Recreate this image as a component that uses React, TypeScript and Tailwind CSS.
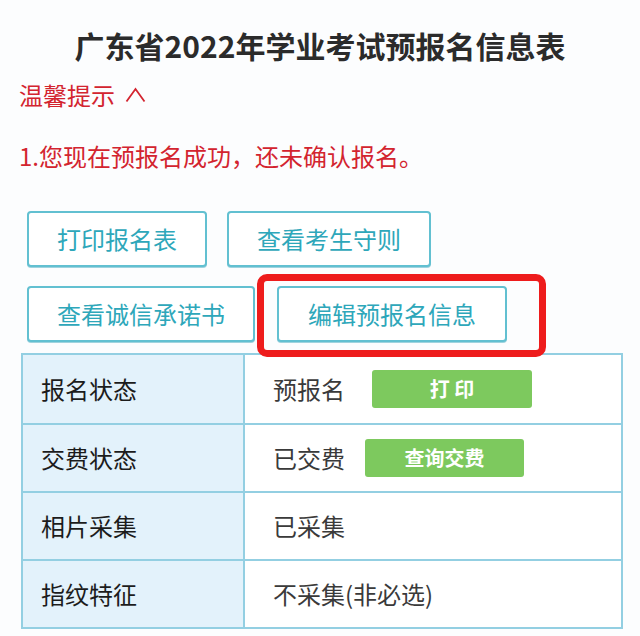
const FONT = '"Noto Sans CJK SC", "Noto Sans", sans-serif';

const rows = [
  { label: '报名状态', value: '预报名', action: '打 印', gap: 'ml-[27px]', w: 'w-[160px]' },
  { label: '交费状态', value: '已交费', action: '查询交费', gap: 'ml-[20px]', w: 'w-[159px]' },
  { label: '相片采集', value: '已采集' },
  { label: '指纹特征', value: '不采集(非必选)' },
];

function OutlineButton({ children, className = '' }: { children: React.ReactNode; className?: string }) {
  return (
    <div
      className={`flex h-[56px] items-center justify-center rounded-[4px] border-2 border-[#62c0d1] bg-white px-[28px] text-[24px] leading-none text-[#2ea7ba] shadow-[0_1px_0_#9fd3de] ${className}`}
    >
      {children}
    </div>
  );
}

export default function App() {
  return (
    <div className="h-[636px] w-[640px] overflow-hidden bg-[#fcfdfe]" style={{ fontFamily: FONT }}>
      {/* title */}
      <div className="pt-[25px] text-center text-[30px] font-bold leading-[40px] text-[#2b2b2b]">
        广东省2022年学业考试预报名信息表
      </div>

      {/* tips */}
      <div className="mt-[14px] flex items-center pl-[19px] text-[24px] leading-[32px] text-[#d3242f]">
        <span>温馨提示</span>
        <svg className="ml-[10px]" width="21" height="16" viewBox="0 0 21 16" fill="none">
          <polyline points="1.5,14.5 10.5,2 19.5,14.5" stroke="#d3242f" strokeWidth="1.8" strokeLinejoin="miter" />
        </svg>
      </div>
      <div className="mt-[29px] pl-[19px] text-[24px] leading-[32px] text-[#d3242f]">
        1.您现在预报名成功，还未确认报名。
      </div>

      {/* action buttons */}
      <div className="mt-[39px] flex flex-col gap-[19px] pl-[27px]">
        <div className="flex gap-[20px]">
          <OutlineButton>打印报名表</OutlineButton>
          <OutlineButton>查看考生守则</OutlineButton>
        </div>
        <div className="flex gap-[22px]">
          <OutlineButton>查看诚信承诺书</OutlineButton>
          <div className="relative">
            <OutlineButton className="w-[230px] px-0">编辑预报名信息</OutlineButton>
            <div className="pointer-events-none absolute -bottom-[15px] -left-[20px] -right-[39px] -top-[12px] z-10 rounded-[10px] border-[7px] border-[#ee1c1c]" />
          </div>
        </div>
      </div>

      {/* info table */}
      <div className="ml-[21px] mt-[11px] w-[602px] border-2 border-[#93cfe2]">
        {rows.map((r, i) => (
          <div key={r.label} className={`flex h-[68px] ${i > 0 ? 'border-t-2 border-[#93cfe2]' : ''}`}>
            <div className="flex w-[222px] items-center border-r-2 border-[#93cfe2] bg-[#e3f2fb] pl-[18px] text-[24px] text-[#1c1c1c]">
              {r.label}
            </div>
            <div className="flex flex-1 items-center bg-white pl-[28px] text-[24px] text-[#3a3a3a]">
              <span>{r.value}</span>
              {r.action && (
                <div
                  className={`${r.gap} ${r.w} flex h-[38px] items-center justify-center rounded-[3px] bg-[#7dc95e] text-[20px] font-bold text-white`}
                >
                  {r.action}
                </div>
              )}
            </div>
          </div>
        ))}
      </div>
    </div>
  );
}
